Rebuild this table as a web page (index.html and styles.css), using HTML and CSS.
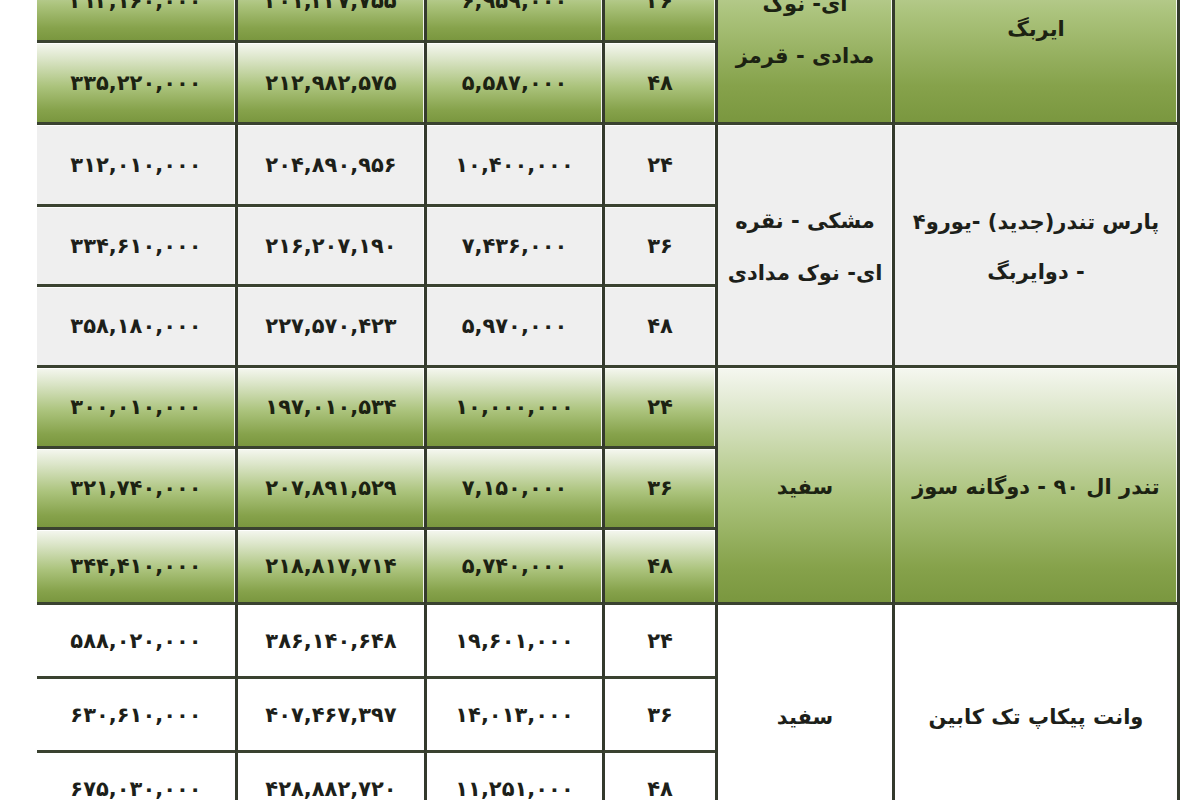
FILE: index.html
```html
<!DOCTYPE html>
<html lang="fa" dir="rtl">
<head>
<meta charset="utf-8">
<title>جدول فروش اقساطی</title>
<link rel="stylesheet" href="styles.css">
</head>
<body>
<div class="page">
<table class="prices">
<colgroup>
<col class="c-model"><col class="c-color"><col class="c-month"><col class="c-pre"><col class="c-loan"><col class="c-total">
</colgroup>
<tbody class="grp green g1">
<tr class="r1">
<td class="model" rowspan="3">پارس تندر -یورو۴ - تک<br>ایربگ</td>
<td class="color" rowspan="3">مشکی - نقره<br>ای- نوک<br>مدادی - قرمز</td>
<td>۲۴</td><td>۹,۶۷۰,۰۰۰</td><td>۱۹۰,۱۰۸,۳۹۰</td><td class="last">۲۹۰,۱۱۰,۰۰۰</td>
</tr>
<tr class="r2"><td>۳۶</td><td>۶,۹۵۹,۰۰۰</td><td>۲۰۱,۲۲۷,۷۵۵</td><td class="last">۳۱۲,۱۶۰,۰۰۰</td></tr>
<tr class="r3"><td>۴۸</td><td>۵,۵۸۷,۰۰۰</td><td>۲۱۲,۹۸۲,۵۷۵</td><td class="last">۳۳۵,۲۲۰,۰۰۰</td></tr>
</tbody>
<tbody class="grp grey g2">
<tr class="r1">
<td class="model" rowspan="3">پارس تندر(جدید) -یورو۴<br>- دوایربگ</td>
<td class="color" rowspan="3">مشکی - نقره<br>ای- نوک مدادی</td>
<td>۲۴</td><td>۱۰,۴۰۰,۰۰۰</td><td>۲۰۴,۸۹۰,۹۵۶</td><td class="last">۳۱۲,۰۱۰,۰۰۰</td>
</tr>
<tr class="r2"><td>۳۶</td><td>۷,۴۳۶,۰۰۰</td><td>۲۱۶,۲۰۷,۱۹۰</td><td class="last">۳۳۴,۶۱۰,۰۰۰</td></tr>
<tr class="r3"><td>۴۸</td><td>۵,۹۷۰,۰۰۰</td><td>۲۲۷,۵۷۰,۴۲۳</td><td class="last">۳۵۸,۱۸۰,۰۰۰</td></tr>
</tbody>
<tbody class="grp green g3">
<tr class="r1">
<td class="model" rowspan="3">تندر ال ۹۰ - دوگانه سوز</td>
<td class="color" rowspan="3">سفید</td>
<td>۲۴</td><td>۱۰,۰۰۰,۰۰۰</td><td>۱۹۷,۰۱۰,۵۳۴</td><td class="last">۳۰۰,۰۱۰,۰۰۰</td>
</tr>
<tr class="r2"><td>۳۶</td><td>۷,۱۵۰,۰۰۰</td><td>۲۰۷,۸۹۱,۵۲۹</td><td class="last">۳۲۱,۷۴۰,۰۰۰</td></tr>
<tr class="r3"><td>۴۸</td><td>۵,۷۴۰,۰۰۰</td><td>۲۱۸,۸۱۷,۷۱۴</td><td class="last">۳۴۴,۴۱۰,۰۰۰</td></tr>
</tbody>
<tbody class="grp white g4">
<tr class="r1">
<td class="model" rowspan="3">وانت پیکاپ تک کابین</td>
<td class="color" rowspan="3">سفید</td>
<td>۲۴</td><td>۱۹,۶۰۱,۰۰۰</td><td>۳۸۶,۱۴۰,۶۴۸</td><td class="last">۵۸۸,۰۲۰,۰۰۰</td>
</tr>
<tr class="r2"><td>۳۶</td><td>۱۴,۰۱۳,۰۰۰</td><td>۴۰۷,۴۶۷,۳۹۷</td><td class="last">۶۳۰,۶۱۰,۰۰۰</td></tr>
<tr class="r3"><td>۴۸</td><td>۱۱,۲۵۱,۰۰۰</td><td>۴۲۸,۸۸۲,۷۲۰</td><td class="last">۶۷۵,۰۳۰,۰۰۰</td></tr>
</tbody>
</table>
</div>
</body>
</html>
```
FILE: styles.css
```css
html, body {
  margin: 0;
  padding: 0;
  background: #ffffff;
  overflow: hidden;
}
body {
  font-family: "DejaVu Sans", "Noto Sans", sans-serif;
  color: #1d1f1a;
}
.page {
  padding: 0 20px 0 37px;
  margin-top: -119px;
  direction: ltr;
}
.prices {
  direction: rtl;
  width: 1143px;
  table-layout: fixed;
  border-collapse: separate;
  border-spacing: 0;
}
.c-model { width: 288px; }
.c-color { width: 177px; }
.c-month { width: 113px; }
.c-pre { width: 178px; }
.c-loan { width: 189px; }
.c-total { width: 198px; }

.prices td {
  box-sizing: border-box;
  border-left: 3px solid #343a2d;
  border-bottom: 3px solid #3a4230;
  box-shadow: inset -1px 1px 0 rgba(255,255,255,0.85);
  text-align: center;
  vertical-align: middle;
  font-weight: bold;
  font-size: 21px;
  letter-spacing: 2.5px;
  padding: 0;
}
.prices td.last { border-left: 0; }
.prices td.model {
  border-right: 3px solid #343a2d;
  font-size: 21px;
  letter-spacing: 0;
  line-height: 50px;
  padding-top: 4px;
}
.prices td.color {
  font-size: 21px;
  letter-spacing: 0;
  line-height: 52px;
  padding-top: 4px;
}

.g1 .r1 td, .g1 .r2 td { height: 81px; }
.g1 .r3 td { height: 82px; }
.g2 .r1 td { height: 82px; }
.g2 .r2 td { height: 80px; }
.g2 .r3 td { height: 81px; }
.g3 .r1 td, .g3 .r2 td { height: 81px; }
.g3 .r3 td { height: 75px; }
.g4 td { height: 74px; }

.green td {
  background: linear-gradient(to bottom, #f5f7f0 0%, #dbe5c8 20%, #abc37c 55%, #86a24b 85%, #7a973f 100%);
  color: #1c2212;
}
.grey td { background: #efefef; }
.white td { background: #ffffff; }
```
